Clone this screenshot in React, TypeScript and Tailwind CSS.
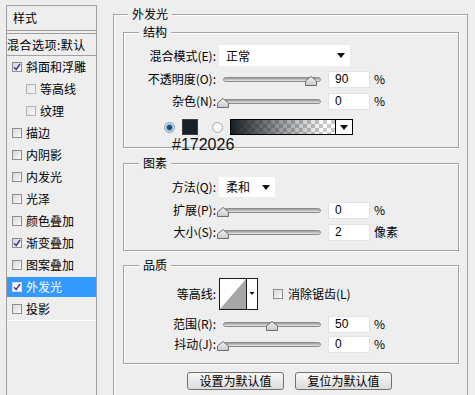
import type { ReactNode } from "react"

const sidebarItems = [
  { text: "斜面和浮雕", checked: true },
  { text: "等高线", sub: true },
  { text: "纹理", sub: true },
  { text: "描边" },
  { text: "内阴影" },
  { text: "内发光" },
  { text: "光泽" },
  { text: "颜色叠加" },
  { text: "渐变叠加", checked: true },
  { text: "图案叠加" },
  { text: "外发光", checked: true, selected: true },
  { text: "投影" },
]

function Checkbox({ checked, light }: { checked?: boolean; light?: boolean }) {
  return (
    <span
      className={
        "w-[10px] h-[10px] shrink-0 flex items-center justify-center border " +
        (light
          ? "border-[#b4b4b4] bg-linear-to-br from-[#e4e4e4] to-[#f8f8f8]"
          : "border-[#8e8e8e] bg-linear-to-br from-[#d6d6d6] to-[#fbfbfb]")
      }
    >
      {checked && (
        <svg width="8" height="8" viewBox="0 0 8 8">
          <path d="M1 4.2 L3.2 6.5 L7 1" stroke="#4b3fa6" strokeWidth="1.6" fill="none" />
        </svg>
      )}
    </span>
  )
}

function Label({ children }: { children: ReactNode }) {
  return <span className="w-[92px] shrink-0 text-right whitespace-nowrap">{children}</span>
}

function Input({ value }: { value: string }) {
  return (
    <span className="ml-[3px] w-[42px] h-[17px] shrink-0 flex items-center pl-[6px] bg-white border border-[#e2e2e2] font-['Liberation_Sans',sans-serif] text-[12px]">
      {value}
    </span>
  )
}

function SliderRow({ label, pos, value, unit, h = "h-[22px]" }: { label: string; pos: number; value: string; unit: string; h?: string }) {
  return (
    <div className={"flex items-center " + h}>
      <Label>{label}</Label>
      <div className="relative ml-[3px] w-[106px] h-full shrink-0 flex items-center px-[4px]">
        <div className="h-[5px] w-full rounded-full border border-[#8c8c8c] bg-linear-to-b from-[#9a9a9a] to-[#e6e6e6]" />
        <svg
          className="absolute top-1/2 -mt-[3px]"
          style={{ left: 4 + pos * 0.98 - 6 }}
          width="12"
          height="10"
          viewBox="0 0 12 10"
        >
          <defs>
            <linearGradient id="thumb" x1="0" y1="0" x2="0" y2="1">
              <stop offset="0" stopColor="#f4f4f4" />
              <stop offset="1" stopColor="#c8c8c8" />
            </linearGradient>
          </defs>
          <path d="M6 0.5 L11.5 5 V9.5 H0.5 V5 Z" fill="url(#thumb)" stroke="#6e6e6e" strokeWidth="1" />
        </svg>
      </div>
      <Input value={value} />
      <span className="ml-[4px] whitespace-nowrap">{unit}</span>
    </div>
  )
}

function Arrow() {
  return (
    <svg width="8" height="5" viewBox="0 0 8 5">
      <path d="M0 0 H8 L4 5 Z" fill="#111" />
    </svg>
  )
}

function Group({ title, className, children }: { title: string; className: string; children: ReactNode }) {
  return (
    <div className={"relative border border-[#a3a3a3] shadow-[1px_1px_0_#ffffff,inset_1px_1px_0_#ffffff] " + className}>
      <span className="absolute -top-[9px] left-[15px] px-[4px] bg-[#eeeeee] leading-[16px]">{title}</span>
      {children}
    </div>
  )
}

function Radio({ on }: { on?: boolean }) {
  return (
    <svg width="11" height="11" viewBox="0 0 11 11" className="shrink-0">
      {on ? (
        <>
          <circle cx="5.5" cy="5.5" r="5" fill="#cfe3f2" stroke="#8a9aa8" />
          <circle cx="5.5" cy="5.5" r="3" fill="#1f4b73" stroke="#6fa6d2" strokeWidth="1" />
        </>
      ) : (
        <circle cx="5.5" cy="5.5" r="5" fill="#f6f6f6" stroke="#a8a8a8" />
      )}
    </svg>
  )
}

export default function App() {
  return (
    <div className="w-[475px] h-[395px] overflow-hidden bg-[#eeeeee] flex items-start text-[12px] leading-[16px] text-black font-['Noto_Sans_CJK_SC',sans-serif]">
      {/* left list */}
      <div className="ml-[6px] mt-[5px] w-[91px] h-[400px] shrink-0 border-l border-r border-t border-[#a0a0a0] flex flex-col">
        <div className="h-[25px] border-b border-[#a0a0a0] pl-[6px] flex items-center">样式</div>
        <div className="mt-[2px] h-[23px] border-t border-b border-[#a0a0a0] flex items-center whitespace-nowrap tracking-[0.5px]">
          混合选项:默认
        </div>
        <div className="border-b border-white">
          {sidebarItems.map((item) => (
            <div key={item.text} className="h-[22px] flex items-center">
              <div
                className={
                  "w-full h-[20px] flex items-center gap-[4px] " +
                  (item.sub ? "pl-[19px] " : "pl-[5px] ") +
                  (item.selected ? "bg-[#3399ff] text-white" : "")
                }
              >
                {item.selected ? (
                  <span className="w-[10px] h-[10px] shrink-0 flex items-center justify-center bg-white border border-[#dcdcdc]">
                    <svg width="8" height="8" viewBox="0 0 8 8">
                      <path d="M1 4.2 L3.2 6.5 L7 1" stroke="#4b3fa6" strokeWidth="1.6" fill="none" />
                    </svg>
                  </span>
                ) : (
                  <Checkbox checked={item.checked} light={item.sub} />
                )}
                <span className="whitespace-nowrap">{item.text}</span>
              </div>
            </div>
          ))}
        </div>
      </div>

      {/* right panel */}
      <div className="relative ml-[16px] mt-[14px] w-[355px] h-[400px] shrink-0 border-l border-t border-r border-[#a3a3a3] shadow-[inset_1px_1px_0_#ffffff] pl-[9px] pr-[8px] pt-[17px] flex flex-col">
        <span className="absolute -top-[9px] left-[14px] px-[4px] bg-[#eeeeee] leading-[16px]">外发光</span>

        <Group title="结构" className="h-[116px] pt-[12px]">
          <div className="flex items-center h-[21px]">
            <Label>混合模式(E):</Label>
            <div className="ml-[3px] w-[131px] h-[21px] bg-white flex items-center justify-between pl-[7px] pr-[5px]">
              <span>正常</span>
              <Arrow />
            </div>
          </div>
          <div className="mt-[2px]">
            <SliderRow label="不透明度(O):" pos={90} value="90" unit="%" />
            <SliderRow label="杂色(N):" pos={0} value="0" unit="%" />
          </div>
          <div className="mt-[7px] h-[16px] pl-[40px] flex items-center">
            <Radio on />
            <span className="ml-[7px] w-[16px] h-[16px] bg-[#172026] border border-[#3a3f44]" />
            <span className="ml-[14px]">
              <Radio />
            </span>
            <div className="ml-[7px] w-[123px] h-[16px] border border-black flex">
              <div className="w-[104px] h-full bg-[conic-gradient(#c9c9c9_25%,#ffffff_0_50%,#c9c9c9_0_75%,#ffffff_0)] bg-[length:8px_8px]">
                <div className="w-full h-full bg-linear-to-r from-[#1a1f24] via-[#1a1f2488] via-40% to-transparent to-90%" />
              </div>
              <div className="flex-1 border-l border-black bg-white flex items-center justify-center">
                <Arrow />
              </div>
            </div>
          </div>
          <span className="absolute left-[48px] top-[104px] font-['Liberation_Sans',sans-serif] text-[16px] leading-none text-[#111]">
            #172026
          </span>
        </Group>

        <Group title="图素" className="mt-[15px] h-[88px] pt-[13px]">
          <div className="flex items-center h-[20px]">
            <Label>方法(Q):</Label>
            <div className="ml-[3px] w-[56px] h-[20px] bg-white flex items-center justify-between pl-[7px] pr-[5px]">
              <span>柔和</span>
              <Arrow />
            </div>
          </div>
          <div className="mt-[2px]">
            <SliderRow label="扩展(P):" pos={0} value="0" unit="%" />
            <SliderRow label="大小(S):" pos={0} value="2" unit="像素" />
          </div>
        </Group>

        <Group title="品质" className="mt-[14px] h-[99px] pt-[12px]">
          <div className="flex items-center h-[32px]">
            <Label>等高线:</Label>
            <svg className="ml-[3px] shrink-0" width="39" height="32" viewBox="0 0 39 32">
              <rect x="0.5" y="0.5" width="38" height="31" fill="#ffffff" stroke="#1a1a1a" />
              <path d="M1 31 L27 1 L27 31 Z" fill="#a7a7a7" />
              <line x1="27.5" y1="0" x2="27.5" y2="32" stroke="#1a1a1a" />
              <path d="M30.5 14 H35.5 L33 17 Z" fill="#111" />
            </svg>
            <span className="ml-[15px]">
              <Checkbox />
            </span>
            <span className="ml-[5px] whitespace-nowrap">消除锯齿(L)</span>
          </div>
          <div className="mt-[4px]">
            <SliderRow label="范围(R):" pos={50} value="50" unit="%" h="h-[20px]" />
            <SliderRow label="抖动(J):" pos={0} value="0" unit="%" h="h-[20px]" />
          </div>
        </Group>

        <div className="mt-[8px] pl-[64px] flex gap-[11px]">
          <button className="w-[97px] h-[18px] rounded-[3px] border border-[#707070] bg-linear-to-b from-[#f7f7f7] to-[#dcdcdc] flex items-center justify-center leading-none">
            设置为默认值
          </button>
          <button className="w-[97px] h-[18px] rounded-[3px] border border-[#707070] bg-linear-to-b from-[#f7f7f7] to-[#dcdcdc] flex items-center justify-center leading-none">
            复位为默认值
          </button>
        </div>
      </div>
    </div>
  )
}
